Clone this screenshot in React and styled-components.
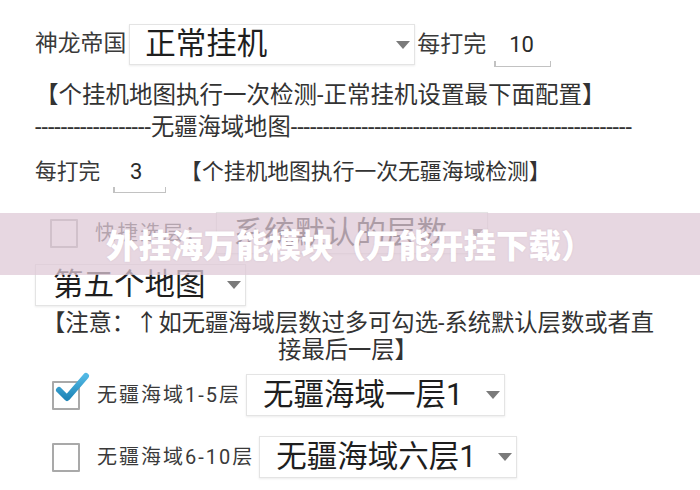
import React from "react";
import styled, { createGlobalStyle } from "styled-components";

const Global = createGlobalStyle`
  html, body { margin: 0; padding: 0; background: #fff; }
  body { font-family: Roboto, "Noto Sans CJK SC", sans-serif; color: #333; }
`;

const Page = styled.div`
  position: relative;
  width: 700px;
  height: 490px;
  overflow: hidden;
  box-sizing: border-box;
  padding: 24px 0 0 35px;
  display: flex;
  flex-direction: column;
  align-items: flex-start;
`;

const Row = styled.div`
  display: flex;
  align-items: center;
  height: ${(p) => p.$h || 42}px;
  margin-top: ${(p) => p.$mt || 0}px;
  margin-left: ${(p) => p.$ml || 0}px;
`;

const Label = styled.span`
  font-size: ${(p) => p.$fs || 22}px;
  letter-spacing: ${(p) => p.$ls || 0}px;
  margin-left: ${(p) => p.$ml || 0}px;
  color: ${(p) => p.$c || "#3a3a3a"};
  white-space: nowrap;
  line-height: 1;
`;

const Select = styled.div`
  box-sizing: border-box;
  display: flex;
  align-items: center;
  justify-content: space-between;
  width: ${(p) => p.$w}px;
  height: ${(p) => p.$h || 42}px;
  margin-left: ${(p) => p.$ml || 0}px;
  padding: 0 ${(p) => p.$pr || 4}px 0 ${(p) => p.$pl || 15}px;
  border: 1px solid #e4e4e4;
  box-shadow: 0 1px 2px rgba(0, 0, 0, 0.08);
  background: #fff;
  font-size: 30.5px;
  line-height: 1;
  color: #1e1e1e;
  white-space: nowrap;
`;

const Field = styled.div`
  position: relative;
  box-sizing: border-box;
  display: flex;
  align-items: center;
  align-self: ${(p) => p.$self || "center"};
  width: ${(p) => p.$w}px;
  height: ${(p) => p.$h}px;
  margin-left: ${(p) => p.$ml || 0}px;
  padding-left: ${(p) => p.$pl || 0}px;
  font-size: 22px;
  line-height: 1;
  color: #2a2a2a;
  border-bottom: 1.5px solid #c2c2c2;
  &::before,
  &::after {
    content: "";
    position: absolute;
    bottom: 0;
    width: 1.5px;
    height: 5px;
    background: #c2c2c2;
  }
  &::before { left: 0; }
  &::after { right: 0; }
`;

const Note = styled.div`
  font-size: ${(p) => p.$fs || 23}px;
  line-height: ${(p) => p.$lh || 30}px;
  margin-top: ${(p) => p.$mt || 0}px;
  margin-left: ${(p) => p.$ml || 0}px;
  width: ${(p) => (p.$w ? p.$w + "px" : "auto")};
  text-align: ${(p) => p.$align || "left"};
  color: #333;
  white-space: nowrap;
`;

const Box = styled.div`
  position: relative;
  box-sizing: border-box;
  width: 28px;
  height: 29px;
  margin-left: ${(p) => p.$ml || 0}px;
  border: 2px solid #a9a9a9;
  border-radius: 1px;
  flex-shrink: 0;
`;

const Check = styled.svg`
  position: absolute;
  left: 2px;
  top: -10px;
  overflow: visible;
`;

const Band = styled.div`
  position: absolute;
  left: 0;
  right: 0;
  top: 213px;
  height: 62px;
  background: rgba(223, 201, 214, 0.74);
  display: flex;
  align-items: center;
  padding-left: 106px;
  box-sizing: border-box;
`;

const Title = styled.span`
  font-family: "Noto Sans CJK SC", sans-serif;
  font-size: 32.5px;
  font-weight: 900;
  color: #fff;
  line-height: 1;
  white-space: nowrap;
  text-shadow: 0 0 2px rgba(120, 90, 110, 0.15);
`;

const Arrow = () => (
  <svg width="14" height="8" viewBox="0 0 14 8">
    <path d="M0 0 L14 0 L7 8 Z" fill="#7a7a7a" />
  </svg>
);

const CheckMark = () => (
  <Check width="34" height="34" viewBox="0 0 34 34">
    <defs>
      <linearGradient id="cg" x1="0" y1="0" x2="0" y2="1">
        <stop offset="0" stopColor="#52b8e4" />
        <stop offset="1" stopColor="#1f86b8" />
      </linearGradient>
    </defs>
    <path
      d="M3 17 L11 25 L30 3"
      fill="none"
      stroke="url(#cg)"
      strokeWidth="6"
      strokeLinecap="round"
      strokeLinejoin="round"
    />
  </Check>
);

export default function App() {
  const left = "-".repeat(18);
  const right = "-".repeat(53);
  return (
    <>
      <Global />
      <Page>
        <Row $h={41}>
          <Label $fs={22.8}>神龙帝国</Label>
          <Select $w={286} $h={41} $ml={3} $pl={15}>
            正常挂机
            <Arrow />
          </Select>
          <Label $fs={23} $ml={2}>每打完</Label>
          <Field $w={57} $h={43} $ml={8} $pl={15} $self="flex-start">10</Field>
        </Row>

        <Note $fs={23.5} $mt={15}>【个挂机地图执行一次检测-正常挂机设置最下面配置】</Note>
        <Note $fs={23.3} $mt={2}>
          {left}无疆海域地图{right}
        </Note>

        <Row $h={40} $mt={10}>
          <Label $fs={21.7}>每打完</Label>
          <Field $w={53} $h={41} $ml={13} $pl={17} $self="flex-start">3</Field>
          <Label $fs={21.8} $ml={14} $c="#333">【个挂机地图执行一次无疆海域检测】</Label>
        </Row>

        <Row $h={42} $mt={20} $ml={15}>
          <Box />
          <Label $fs={20.5} $ls={2} $ml={17}>快捷选层：</Label>
          <Select $w={272} $ml={8} $pl={17}>
            系统默认的层数
            <Arrow />
          </Select>
        </Row>

        <Row $h={42} $mt={10}>
          <Select $w={211} $pl={17}>
            第五个地图
            <Arrow />
          </Select>
        </Row>

        <Note $fs={23.3} $lh={27} $mt={4} $w={626} $align="center">
          【注意：↑如无疆海域层数过多可勾选-系统默认层数或者直
          <br />
          接最后一层】
        </Note>

        <Row $h={42} $mt={10} $ml={17}>
          <Box>
            <CheckMark />
          </Box>
          <Label $fs={20} $ls={2} $ml={17}>无疆海域1-5层</Label>
          <Select $w={259} $ml={5} $pl={16}>
            无疆海域一层1
            <Arrow />
          </Select>
        </Row>

        <Row $h={42} $mt={20} $ml={17}>
          <Box />
          <Label $fs={20} $ls={2} $ml={17}>无疆海域6-10层</Label>
          <Select $w={258} $ml={5} $pl={16}>
            无疆海域六层1
            <Arrow />
          </Select>
        </Row>

        <Band>
          <Title>外挂海万能模块（万能开挂下载）</Title>
        </Band>
      </Page>
    </>
  );
}
